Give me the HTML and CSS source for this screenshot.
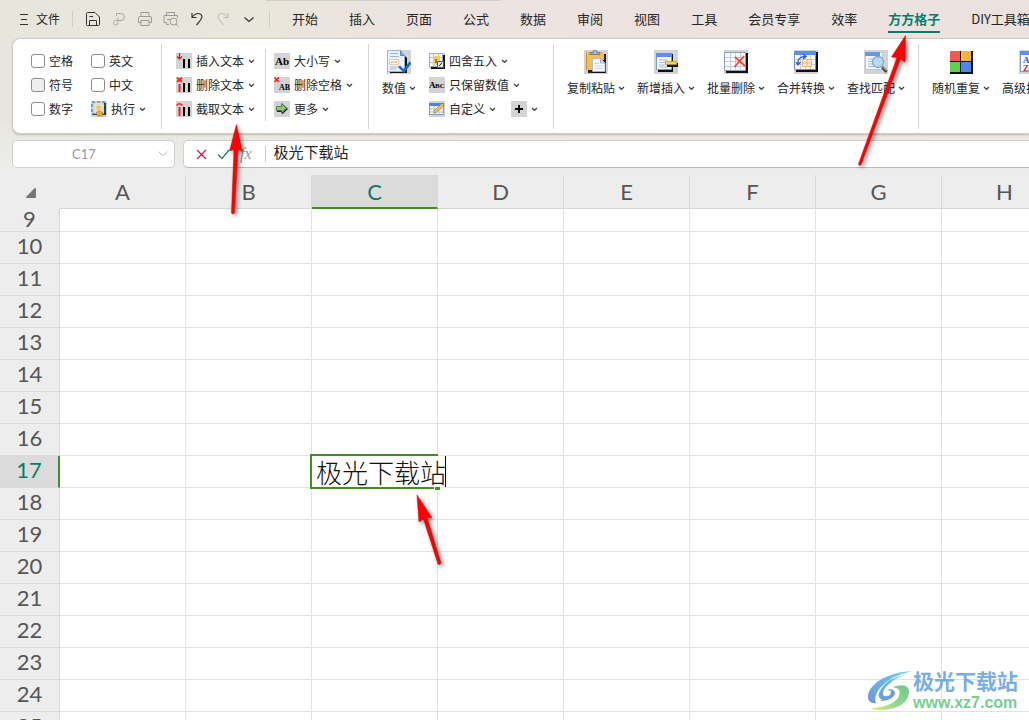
FILE: index.html
```html
<!DOCTYPE html>
<html lang="zh-CN">
<head>
<meta charset="utf-8">
<title>极光下载站</title>
<link rel="stylesheet" href="styles.css">
</head>
<body>
<svg class="defs" aria-hidden="true">
  <symbol id="chev" viewBox="0 0 7 5"><path d="M1 1 3.500 3.300 6 1" fill="none" stroke="#444" stroke-width="1.300"/></symbol>
</svg>
<div class="app">
  <header class="menubar">
    <button class="file"><svg width="10" height="12" viewBox="0 0 10 12" stroke="#333" fill="none"><path d="M1 1.500h8M2 6.500h6M1 11.500h8"/></svg>文件</button>
    <i class="bar"></i>
    <div class="quick">
      <button aria-label="保存"><svg viewBox="0 0 18 18" stroke="#333"><path d="M2.500 14V3.500Q2.500 2.500 3.500 2.500H11L15.500 7V14.500Q15.500 15.500 14.500 15.500H3.500Q2.500 15.500 2.500 14.500ZM5.500 6.500H9M5.500 15V10.500H12.500V15"/></svg></button>
      <button aria-label="输出"><svg viewBox="0 0 18 18" stroke="#aaa"><path d="M6.500 6V3.500H11Q14.500 3.500 14.500 7Q14.500 10.500 11 10.500H5.500Q3.500 10.500 3.500 12.500Q3.500 15 5.500 15Q8 15 8 12.500V7.500"/></svg></button>
      <button aria-label="打印"><svg viewBox="0 0 18 18" stroke="#999"><path d="M5 6.500V2.500H13V6.500M5 12.500H2.500V8Q2.500 6.500 4 6.500H14Q15.500 6.500 15.500 8V12.500H13M5 10.500H13V15.500H5Z"/></svg></button>
      <button aria-label="打印预览"><svg viewBox="0 0 18 18" stroke="#999"><path d="M4.500 5.500V2.500H12.500V5.500M4.500 14.500V12.500H2V5.500H15.500V8M4.500 14.500H7M5 9.500H8"/><circle cx="11.500" cy="11.500" r="3.500"/><path d="M14 14 16.500 16.500"/></svg></button>
      <button aria-label="撤销"><svg viewBox="0 0 18 18" stroke="#333" stroke-width="1.200"><path d="M4 3V7.500H8.500M4 7.500Q7 3.500 10 3.500Q13.500 3.500 14 6.500Q14 9 8.500 15"/></svg></button>
      <button aria-label="重做"><svg viewBox="0 0 18 18" stroke="#bbb"><path d="M14 3V7.500H9.500M14 7.500Q11 3.500 8 3.500Q4.500 3.500 4 6.500Q4 9 9.500 15"/></svg></button>
      <button aria-label="更多命令"><svg viewBox="0 0 18 18" stroke="#333" stroke-width="1.300"><path d="M4.500 7.500 9 11.500 13.500 7.500"/></svg></button>
    </div>
    <i class="bar"></i>
    <nav class="tabs">
      <a href="#">开始</a><a href="#">插入</a><a href="#">页面</a><a href="#">公式</a><a href="#">数据</a><a href="#">审阅</a><a href="#">视图</a><a href="#">工具</a><a href="#">会员专享</a><a href="#">效率</a><a href="#" class="active" aria-current="page">方方格子</a><a href="#">DIY工具箱</a>
    </nav>
  </header>

  <section class="ribbon" aria-label="方方格子">
    <div class="group checks">
      <label><input type="checkbox">空格</label>
      <label><input type="checkbox">英文</label>
      <label><input type="checkbox" class="hover">符号</label>
      <label><input type="checkbox">中文</label>
      <label><input type="checkbox">数字</label>
      <button class="cmd"><svg class="ic" viewBox="0 0 16 16"><path fill="#d3d3d3" d="M0 0h16v16H0z"/><path d="M2 2h13v12H2z" fill="#333"/><path d="M1 1h12v12H1z" fill="#c5dcf3"/><path d="M1 1h13v12H1z" fill="none" stroke="#2a5a94" stroke-dasharray="3 2"/><path d="m7.500 1.500 1.400 3 3.300.4-2.400 2.300.6 3.300-2.900-1.700-2.900 1.700.6-3.300-2.400-2.300 3.300-.4z" fill="#ffc44d" stroke="#fff3d0" stroke-width=".7"/><path d="m5 12 3-2.500 3.500 2V15H6.500Z" fill="#e6b02b" stroke="#8c6a20" stroke-width=".5"/></svg>执行<svg class="ch"><use href="#chev"/></svg></button>
    </div>
    <i class="rule"></i>
    <div class="group col textops">
      <button class="cmd"><svg class="ic" viewBox="0 0 16 16"><path fill="#d3d3d3" d="M0 0h16v16H0z"/><path d="M3.500 0v6M1 3.500l2.500 2.500L6 3.500" fill="none" stroke="#f00" stroke-width="1.200"/><path d="M7 6h2v9H7zM12 6h2v9h-2z"/></svg>插入文本<svg class="ch"><use href="#chev"/></svg></button>
      <button class="cmd"><svg class="ic" viewBox="0 0 16 16"><path fill="#d3d3d3" d="M0 0h16v16H0z"/><path d="M1 .5 6 5M6 .5 1 5" stroke="#f22" stroke-width="1.700"/><path d="M2.500 7h2v8h-2z" fill="#e22"/><path d="M7 6h2v9H7zM12 6h2v9h-2z"/></svg>删除文本<svg class="ch"><use href="#chev"/></svg></button>
      <button class="cmd"><svg class="ic" viewBox="0 0 16 16"><path fill="#d3d3d3" d="M0 0h16v16H0z"/><path d="M.5 4.500Q3.500 1 6.500 4.500" fill="none" stroke="#f22" stroke-width="1.400"/><path d="M2.500 6h2v9h-2z" fill="#e22"/><path d="M7 6h2v9H7zM12 6h2v9h-2z"/></svg>截取文本<svg class="ch"><use href="#chev"/></svg></button>
    </div>
    <i class="rule short"></i>
    <div class="group col caseops">
      <button class="cmd"><svg class="ic" viewBox="0 0 16 16"><path fill="#d3d3d3" d="M0 0h16v16H0z"/><text x="1" y="12" class="ab">Ab</text></svg>大小写<svg class="ch"><use href="#chev"/></svg></button>
      <button class="cmd"><svg class="ic" viewBox="0 0 16 16"><path fill="#d3d3d3" d="M0 0h16v16H0z"/><path d="M.5.500 5 5M5 .5.500 5" stroke="#f22" stroke-width="1.600"/><text x="5" y="13" class="tiny">AB</text></svg>删除空格<svg class="ch"><use href="#chev"/></svg></button>
      <button class="cmd"><svg class="ic" viewBox="0 0 16 16"><path fill="#d3d3d3" d="M0 0h16v16H0z"/><path d="M3 6h5V2.500L14 8l-6 5.500V11H3z" fill="#222"/><path d="M2.500 5.500h5V2.500L12.500 7.300 7.500 12V9.500h-5z" fill="#8fc978" stroke="#3f7044" stroke-width=".8"/></svg>更多<svg class="ch"><use href="#chev"/></svg></button>
    </div>
    <i class="rule"></i>
    <div class="group valuebox">
      <button class="big"><svg class="lg" viewBox="0 0 24 24"><path fill="#d3d3d3" d="M0 0h24v24H0z"/><path d="M3 3h12l5 5v15H3z" fill="#111"/><path d="M.5.500h13l4 5v16H.5z" fill="#e9f1fc" stroke="#9db3d3"/><path d="M13.500.500v5h4" fill="#7fa6dd" stroke="#5f82b8"/><path d="M3 3.500h8M3 6.500h9M3 17h8M3 19h6" stroke="#9bb5d8"/><path d="M2.500 9.500h9v5h-9z" fill="#fff" stroke="#f3c79b"/><path d="M4 12h2M6.500 12h1M8 12h2" stroke="#e07f30"/><path d="m11 17 2-1.500 3.500 3.500L23 11l1 3-7 9z" fill="#1d68c5"/></svg><span>数值<svg class="ch"><use href="#chev"/></svg></span></button>
      <div class="col">
        <button class="cmd"><svg class="ic" viewBox="0 0 16 16"><path fill="#d3d3d3" d="M0 0h16v16H0z"/><path d="M2 2h14v14H2z" fill="#111"/><path d="M.5.500h13v13H.5z" fill="#eef4ff" stroke="#9aadca"/><path d="M1 4.500h12M1 9.500h12M4.500 1v12M9.500 1v12" stroke="#b9c8dd"/><path d="M4 3h7v9H4z" fill="#f2cf52"/><path d="M6 6h2v4H6z" fill="#9b7a28"/><path d="M8.500 8.500h6v6h-6z" fill="#e3e8f0" stroke="#556"/><path d="m10 13 3-3" stroke="#223"/></svg>四舍五入<svg class="ch"><use href="#chev"/></svg></button>
        <button class="cmd"><svg class="ic" viewBox="0 0 16 16"><path fill="#d3d3d3" d="M0 0h16v16H0z"/><text x="0" y="11" class="abc">A</text><text x="6" y="11" class="abc small">BC</text></svg>只保留数值<svg class="ch"><use href="#chev"/></svg></button>
        <div class="pair">
          <button class="cmd"><svg class="ic" viewBox="0 0 16 16"><path fill="#d3d3d3" d="M0 0h16v16H0z"/><path d="M.5 2.500h14v11H.5z" fill="#f4f8ff" stroke="#7f9cc5"/><path d="M0 2h15v3H0z" fill="#4d84d8"/><path d="M1 8h13M1 11h13M5 5v8M10 5v8" stroke="#a9c2e3"/><path d="m5 12 .5-2.500L13 2l2 2-7.500 7.500z" fill="#f2bd51" stroke="#8c6422" stroke-width=".5"/></svg>自定义<svg class="ch"><use href="#chev"/></svg></button>
          <button class="cmd" aria-label="添加"><svg class="ic" viewBox="0 0 16 16"><path fill="#d3d3d3" d="M0 0h16v16H0z"/><path d="M4 8h8M8 4v8" stroke="#000" stroke-width="2"/></svg><svg class="ch"><use href="#chev"/></svg></button>
        </div>
      </div>
    </div>
    <i class="rule"></i>
    <div class="group bigs">
      <button class="big"><svg class="lg" viewBox="0 0 24 24"><path fill="#d3d3d3" d="M0 0h24v24H0z"/><path d="M4 4h18v19H4z" fill="#222"/><path d="M2 2h18v18H2z" fill="#f3bd5a"/><path d="M2.500 2.500V20" stroke="#c98f38"/><path d="M6 4.500V2.500h3Q9 0 11 0t2 2.500h3v2z" fill="#aab4c2" stroke="#626c7a" stroke-width=".8"/><path d="M9 10h12v13H9z" fill="#111"/><path d="M8.500 8.500h8l4.500 4.500v8.500H8.500z" fill="#f7faff" stroke="#a9b8d0" stroke-width=".8"/><path d="M16.500 8.500V13H21" fill="#c9d5e8" stroke="#8ea3c4" stroke-width=".8"/><path d="M11 13.500h4M11 16h8M11 18.500h8" stroke="#c6d1e3"/></svg><span>复制粘贴<svg class="ch"><use href="#chev"/></svg></span></button>
      <button class="big"><svg class="lg" viewBox="0 0 24 24"><path fill="#d3d3d3" d="M0 0h24v24H0z"/><path d="M4 4h15v18H4z" fill="#111"/><path d="M2.500 3.500h15v16h-15z" fill="#f4f8ff" stroke="#7f99c2"/><path d="M2 3h16v4H2z" fill="#5c8ff0"/><path d="M5 10h9M5 12.500h6M5 15h6M5 17h8" stroke="#a5bad9"/><path d="M13 13h11v4H13z" fill="#111"/><path d="M11.500 11.500h11v3h-11z" fill="#f4dc46" stroke="#b89a2c" stroke-width=".8"/></svg><span>新增插入<svg class="ch"><use href="#chev"/></svg></span></button>
      <button class="big"><svg class="lg" viewBox="0 0 24 24"><path fill="#d3d3d3" d="M0 0h24v24H0z"/><path d="M2 3h22v20H2z" fill="#111"/><path d="M.5 2.500h21v18H.5z" fill="#f8fbff" stroke="#8ba0be"/><path d="M1 7.500h20M1 11.500h20M1 16.500h20M6.500 3v17M11.500 3v17M16.500 3v17" stroke="#c3cedd"/><path d="m11 7 10 9M20 6 10.500 17" stroke="#f4452d" stroke-width="1.800"/></svg><span>批量删除<svg class="ch"><use href="#chev"/></svg></span></button>
      <button class="big"><svg class="lg" viewBox="0 0 24 24"><path fill="#d3d3d3" d="M0 0h24v24H0z"/><path d="M2 2h22v20H2z" fill="#111"/><path d="M.5 1.500h21v18H.5z" fill="#f8fbff" stroke="#6e91c8"/><path d="M0 1h22v4H0z" fill="#5c8fe8"/><path d="M1 9.500h20M1 14.500h20M6.500 5v14M11.500 5v14M16.500 5v14" stroke="#c3cedd"/><path d="M8.500 9.500h9v7h-9z" fill="#fff0dc" stroke="#f0b27a"/><path d="M13 9.500v7M8.500 13h9" stroke="#f0b27a"/><path d="M4 14Q3 7 11 6.500M9 4l3 2.500L9 9M2 12l2 3 2.500-3" fill="none" stroke="#2863bc" stroke-width="1.300"/></svg><span>合并转换<svg class="ch"><use href="#chev"/></svg></span></button>
      <button class="big"><svg class="lg" viewBox="0 0 24 24"><path fill="#d3d3d3" d="M0 0h24v24H0z"/><path d="M1.500 2.500h17v17h-17z" fill="#f4f8ff" stroke="#b5c5de"/><path d="M1 2h15v4H1z" fill="#6398ec"/><path d="M4 9h8M4 11.500h6M4 14h6M4 16.500h8" stroke="#a5bad9"/><circle cx="14" cy="12" r="5.500" fill="#b5daf7" stroke="#8aa3bd" stroke-width="1.300"/><path d="m18 17 4.500 5" stroke="#444" stroke-width="2.800"/><path d="m18 16.500 4 4" stroke="#bbb"/></svg><span>查找匹配<svg class="ch"><use href="#chev"/></svg></span></button>
    </div>
    <i class="rule"></i>
    <div class="group bigs">
      <button class="big"><svg class="lg" viewBox="0 0 24 24"><path d="M1 1h23v23H1z" fill="#111"/><path d="M1 1h10v10H1z" fill="#f15a50"/><path d="M12 1h10v10H12z" fill="#f5b43b"/><path d="M1 12h10v10H1z" fill="#5ed04e"/><path d="M12 12h10v10H12z" fill="#4d86f0"/></svg><span>随机重复<svg class="ch"><use href="#chev"/></svg></span></button>
      <button class="big"><svg class="lg" viewBox="0 0 24 24"><path fill="#d3d3d3" d="M0 0h24v24H0z"/><path d="M1.500 1.500h20v20h-20z" fill="#f4f8ff" stroke="#7f99c2"/><path d="M1 1h21v4H1z" fill="#5c8ff0"/><text x="4" y="13" class="az">A</text><text x="4" y="21" class="az z">Z</text></svg><span>高级排序<svg class="ch"><use href="#chev"/></svg></span></button>
    </div>
  </section>

  <div class="formula">
    <div class="namebox"><input aria-label="名称框" value="C17"><button aria-label="选择名称"><svg width="12" height="8" viewBox="0 0 12 8"><path d="m1.500 1.500 4.500 4.500 4.500-4.500" fill="none" stroke="#c4c4c4"/></svg></button></div>
    <div class="entry">
      <button aria-label="取消"><svg width="11" height="11" viewBox="0 0 11 11"><path d="m1 1 9 9M10 1 1 10" stroke="#c9184a" stroke-width="1.200"/></svg></button>
      <button aria-label="确认"><svg width="13" height="11" viewBox="0 0 13 11"><path d="m1 5.500 4 4L12 1" fill="none" stroke="#128a5c" stroke-width="1.300"/></svg></button>
      <button aria-label="插入函数" class="fx">fx</button>
      <i class="bar"></i>
      <input aria-label="编辑栏" value="极光下载站">
    </div>
  </div>

  <main class="sheet">
    <table>
      <colgroup><col class="c0"><col class="c"><col class="c"><col class="c"><col class="c"><col class="c"><col class="c"><col class="c"><col></colgroup>
      <thead><tr><td class="corner"><svg width="10" height="10" viewBox="0 0 10 10"><path d="M9 0q1 0 1 1v8q0 1-1 1H1Q-.5 10 .5 8.500L8 .7Q8.500 0 9 0Z" fill="#767676"/></svg></td><th scope="col">A</th><th scope="col">B</th><th scope="col" class="on">C</th><th scope="col">D</th><th scope="col">E</th><th scope="col">F</th><th scope="col">G</th><th scope="col">H</th></tr></thead>
      <tbody>
        <tr class="cut"><th scope="row">9</th><td></td><td></td><td></td><td></td><td></td><td></td><td></td><td></td></tr>
        <tr><th scope="row">10</th><td></td><td></td><td></td><td></td><td></td><td></td><td></td><td></td></tr>
        <tr><th scope="row">11</th><td></td><td></td><td></td><td></td><td></td><td></td><td></td><td></td></tr>
        <tr><th scope="row">12</th><td></td><td></td><td></td><td></td><td></td><td></td><td></td><td></td></tr>
        <tr><th scope="row">13</th><td></td><td></td><td></td><td></td><td></td><td></td><td></td><td></td></tr>
        <tr><th scope="row">14</th><td></td><td></td><td></td><td></td><td></td><td></td><td></td><td></td></tr>
        <tr><th scope="row">15</th><td></td><td></td><td></td><td></td><td></td><td></td><td></td><td></td></tr>
        <tr><th scope="row">16</th><td></td><td></td><td></td><td></td><td></td><td></td><td></td><td></td></tr>
        <tr><th scope="row" class="on">17</th><td></td><td></td><td class="editing"><div class="editor"><input aria-label="C17" value="极光下载站"></div></td><td></td><td></td><td></td><td></td><td></td></tr>
        <tr><th scope="row">18</th><td></td><td></td><td></td><td></td><td></td><td></td><td></td><td></td></tr>
        <tr><th scope="row">19</th><td></td><td></td><td></td><td></td><td></td><td></td><td></td><td></td></tr>
        <tr><th scope="row">20</th><td></td><td></td><td></td><td></td><td></td><td></td><td></td><td></td></tr>
        <tr><th scope="row">21</th><td></td><td></td><td></td><td></td><td></td><td></td><td></td><td></td></tr>
        <tr><th scope="row">22</th><td></td><td></td><td></td><td></td><td></td><td></td><td></td><td></td></tr>
        <tr><th scope="row">23</th><td></td><td></td><td></td><td></td><td></td><td></td><td></td><td></td></tr>
        <tr><th scope="row">24</th><td></td><td></td><td></td><td></td><td></td><td></td><td></td><td></td></tr>
        <tr><th scope="row">25</th><td></td><td></td><td></td><td></td><td></td><td></td><td></td><td></td></tr>
      </tbody>
    </table>
  </main>

  <svg class="arrows" aria-hidden="true" width="1029" height="720" viewBox="0 0 1029 720">
    <g fill="#ff0000" stroke="#d00000" stroke-width=".5" stroke-linejoin="round">
      <path d="M236.500 124.500 242 151 238 149.500 234.500 213Q232.500 215 231.500 213L234 149.500 229.500 151Z"/>
      <path d="M905.500 35.500 905 62 900.500 59 861 165Q859 166 858.500 164L897 57.500 891.500 57Z"/>
      <path d="M417 495 432 518 427 517.500 441 563Q440 565.500 438 564L423.500 519 419 522Z"/>
    </g>
  </svg>

  <aside class="mark">
    <svg width="46" height="42" viewBox="0 0 46 42" aria-hidden="true">
      <defs>
        <linearGradient id="g1" x1="1" y1="0" x2="0" y2="1"><stop offset="0" stop-color="#6fd0f2"/><stop offset="1" stop-color="#6b97da"/></linearGradient>
        <linearGradient id="g2" x1="1" y1="0" x2="0" y2="1"><stop offset="0" stop-color="#68cb90"/><stop offset=".6" stop-color="#97d98a"/><stop offset="1" stop-color="#f0e97c"/></linearGradient>
      </defs>
      <path d="M45 1Q24 2 10 12Q0 20 1 28Q2 34 9 33Q6 27 13 18Q23 6 45 1Z" fill="url(#g1)"/>
      <path d="M38 5Q22 7 14 19Q9 27 15 30Q22 31 25 24Q19 28 16 25Q15 20 22 14Q28 8 38 5Z" fill="url(#g1)"/>
      <path d="M16 22Q20 19 24 21Q25 26 13 31Q27 30 28 23Q26 16 16 22Z" fill="#6b9cdc"/>
      <path d="M25 17Q41 12 42 21Q42 37 17 40Q8 41 4 38Q24 37 31 28Q36 18 25 17Z" fill="url(#g2)"/>
    </svg>
    <div><strong>极光下载站</strong><span>www.xz7.com</span></div>
  </aside>
</div>
</body>
</html>
```

FILE: styles.css
```css
* { box-sizing: border-box; }
body { margin: 0; font: 12px/16px "Noto Sans CJK SC", sans-serif; color: #262626; }
button, input { font: inherit; color: inherit; border: 0; padding: 0; margin: 0; background: none; outline: 0; }
i { display: block; flex: none; }
svg { display: block; flex: none; }
.defs { display: none; }

.app {
  position: relative;
  display: flex;
  flex-direction: column;
  height: 100vh;
  overflow: hidden;
  background:
    linear-gradient(to bottom, #ededed00 120px, #ededed 172px),
    linear-gradient(to right, #e7e6de, #e9e6db 25%, #ede3e0 45%, #ebe2df);
}
.app::before {
  content: "";
  position: absolute;
  top: 0;
  left: 266px;
  width: 235px;
  height: 1px;
  background: #d3cfc9;
}

.menubar { display: flex; align-items: center; height: 38px; padding-left: 19px; flex: none; }
.file { display: flex; flex: none; align-items: center; gap: 7px; margin-right: 12px; white-space: nowrap; }
.bar { width: 1px; height: 16px; background: #d0cdc8; }
.quick { display: flex; flex: none; gap: 8px; margin: 0 11px; }
.quick svg { width: 18px; height: 18px; fill: none; }
.tabs { display: flex; flex: none; gap: 31px; margin-left: 22px; font-size: 13px; white-space: nowrap; }
.tabs a { color: inherit; text-decoration: none; line-height: 24px; border-bottom: 2px solid transparent; margin-top: 2px; }
.tabs .active { color: #0a7a6b; font-weight: 700; border-color: #0a7a6b; }

.ribbon {
  display: flex;
  align-items: flex-start;
  flex: none;
  height: 96px;
  margin-left: 12px;
  padding-top: 5px;
  background: #fff;
  border: 1px solid #cfccc7;
  border-right: 0;
  border-radius: 8px 0 0 8px;
  box-shadow: 0 1px 2px #0003;
  overflow: hidden;
}
.rule { width: 1px; height: 85px; background: #d4d4d4; }
.rule.short { height: 72px; margin-top: 5px; }
.group { flex: none; padding-top: 5px; white-space: nowrap; }
.col { display: grid; grid-auto-rows: 24px; }
.checks { display: grid; grid-template-columns: 60px 70px; grid-auto-rows: 24px; padding-left: 18px; }
.checks label { display: flex; align-items: center; gap: 4px; }
.checks input { appearance: none; width: 14px; height: 14px; border: 1px solid #8c8c8c; border-radius: 3px; background: #fff; }
.checks .hover { background: #eee; }
.cmd { display: flex; align-items: center; gap: 4px; }
.ic { width: 16px; height: 16px; }
.ch { width: 7px; height: 5px; }
.textops { padding-left: 14px; width: 103px; }
.caseops { padding-left: 8px; width: 102px; }
.valuebox { display: flex; padding-left: 10px; width: 184px; }
.valuebox .big { width: 40px; margin-right: 10px; }
.pair { display: flex; gap: 15px; }
.big { display: flex; flex-direction: column; align-items: center; gap: 6px; width: 70px; padding-top: 1px; }
.big span { display: flex; align-items: center; gap: 3px; }
.lg { width: 24px; height: 24px; }
.bigs { display: flex; padding: 5px 7px 0; }
.ab { font: 700 11px "Liberation Serif", serif; }
.tiny { font: 700 8px "Liberation Serif", serif; }
.abc { font: 700 9px "Liberation Serif", serif; }
.abc.small { font-size: 7px; }
.az { font: 700 9px "Liberation Serif", serif; fill: #2458b8; }
.z { fill: #c22f35; }

.formula { display: flex; gap: 8px; flex: none; padding: 6px 0 7px 12px; }
.namebox, .entry { display: flex; align-items: center; height: 28px; background: #fff; border: 1px solid #d2d0cb; border-radius: 5px; }
.namebox { width: 163px; padding-right: 5px; }
.namebox input { flex: 1; min-width: 0; padding-right: 2px; text-align: center; font: 13px/16px Lato, sans-serif; color: #999; }
.entry { flex: 1; gap: 10px; padding-left: 12px; border-right: 0; border-bottom-color: #b8b8b8; border-radius: 5px 0 0 5px; }
.entry .fx { font: italic 16px/18px "Liberation Serif", serif; color: #999; }
.entry .bar { margin-left: 3px; }
.entry input { flex: 1; min-width: 0; margin-left: -2px; padding-bottom: 4px; font-size: 15px; line-height: 22px; }

.sheet { flex: 1; min-height: 0; overflow: hidden; background: #ededed; }
table { table-layout: fixed; width: 100%; min-width: 1068px; border-collapse: separate; border-spacing: 0; }
.c0 { width: 60px; }
.c { width: 126px; }
th, td { height: 32px; padding: 0; border: 0 solid #e2e2e2; border-width: 0 1px 1px 0; }
th { padding-bottom: 4px; font: 22px/26px Lato, sans-serif; color: #555; background: #ededed; border-color: #d8d8d8; }
td { background: #fff; }
thead th, thead td { height: 34px; padding: 0; }
thead .on { padding-top: 1px; color: #0a7a6b; background: #dbdbdb; border-bottom: 2px solid #3f921f; }
tbody .on { color: #0a7a6b; background: #dbdbdb; border-right: 2px solid #3f921f; }
.corner { background: #ededed; border: 0; }
.corner svg { margin: 2px 0 0 26px; }
.cut th { padding-bottom: 2px; line-height: 20px; }
.cut th, .cut td { height: 23px; }

.editing { position: relative; }
.editor {
  position: absolute;
  top: -2px;
  left: -2px;
  width: 128px;
  height: 35px;
  border: 2px solid #3f921f;
  border-right: 0;
  background: #fff;
}
.editor::after {
  content: "";
  position: absolute;
  right: -2px;
  bottom: -3px;
  width: 5px;
  height: 3px;
  background: #3f921f;
  box-shadow: 0 0 0 1px #fff;
}
.editor input { display: block; width: 134px; height: 31px; padding-left: 4px; border-right: 1px solid #000; font-size: 26px; line-height: 30px; font-weight: 300; color: #111; }

.arrows { position: absolute; top: 0; left: 0; pointer-events: none; filter: drop-shadow(2px 2px 2px #0007); }
.mark { position: absolute; right: 11px; bottom: 8px; display: flex; align-items: center; font-family: "Liberation Sans", "Noto Sans CJK SC", sans-serif; }
.mark strong { display: block; font-size: 21px; line-height: 24px; color: #7aade0; }
.mark span { display: block; font-size: 16px; line-height: 18px; font-weight: 700; color: #79ce92; }
```
